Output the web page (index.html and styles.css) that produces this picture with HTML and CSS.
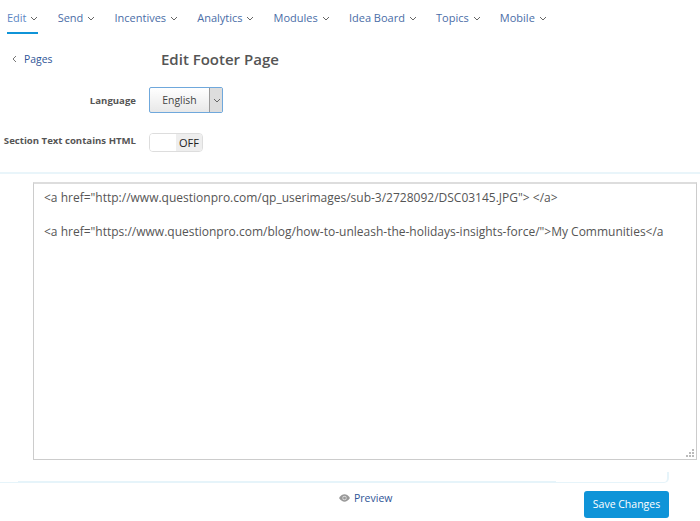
FILE: index.html
```html
<!DOCTYPE html>
<html lang="en">
<head>
<meta charset="utf-8">
<title>Edit Footer Page</title>
<link rel="stylesheet" href="styles.css">
</head>
<body>
<nav class="nav">
  <a class="nav-item active">Edit <svg class="caret" viewBox="0 0 8 5"><path d="M1 1l3 3 3-3"/></svg></a>
  <a class="nav-item">Send <svg class="caret" viewBox="0 0 8 5"><path d="M1 1l3 3 3-3"/></svg></a>
  <a class="nav-item">Incentives <svg class="caret" viewBox="0 0 8 5"><path d="M1 1l3 3 3-3"/></svg></a>
  <a class="nav-item">Analytics <svg class="caret" viewBox="0 0 8 5"><path d="M1 1l3 3 3-3"/></svg></a>
  <a class="nav-item">Modules <svg class="caret" viewBox="0 0 8 5"><path d="M1 1l3 3 3-3"/></svg></a>
  <a class="nav-item">Idea Board <svg class="caret" viewBox="0 0 8 5"><path d="M1 1l3 3 3-3"/></svg></a>
  <a class="nav-item">Topics <svg class="caret" viewBox="0 0 8 5"><path d="M1 1l3 3 3-3"/></svg></a>
  <a class="nav-item">Mobile <svg class="caret" viewBox="0 0 8 5"><path d="M1 1l3 3 3-3"/></svg></a>
</nav>
<header class="page-head">
  <a class="back"><svg class="back-icon" viewBox="0 0 5 8"><path d="M4 1L1 4l3 3"/></svg><span>Pages</span></a>
  <h1 class="title">Edit Footer Page</h1>
</header>
<section class="form">
  <div class="row row-lang">
    <label class="label">Language</label>
    <div class="select"><span class="select-value">English</span><span class="select-arrow"><svg class="caret" viewBox="0 0 8 5"><path d="M1 1l3 3 3-3"/></svg></span></div>
  </div>
  <div class="row row-html">
    <label class="label label-raised">Section Text contains HTML</label>
    <div class="toggle"><span class="toggle-off"></span><span class="toggle-state">OFF</span></div>
  </div>
</section>
<section class="panel">
  <div class="editor-wrap">
    <textarea class="editor" spellcheck="false" wrap="off">&lt;a href="http://www.questionpro.com/qp_userimages/sub-3/2728092/DSC03145.JPG"&gt; &lt;/a&gt;

&lt;a href="https://www.questionpro.com/blog/how-to-unleash-the-holidays-insights-force/"&gt;My Communities&lt;/a</textarea>
    <svg class="grip" viewBox="0 0 8 8"><path d="M6 0h2v2H6zM3 3h2v2H3zM6 3h2v2H6zM0 6h2v2H0zM3 6h2v2H3zM6 6h2v2H6z"/></svg>
  </div>
  <div class="panel-foot"></div>
</section>
<footer class="actions">
  <a class="preview"><svg class="eye" viewBox="0 0 12 8"><path d="M0 4c2-3 4-4 6-4s4 1 6 4c-2 3-4 4-6 4S2 7 0 4z"/><circle cx="6" cy="4" r="2.4" fill="#ddd"/><circle cx="6" cy="4" r="1.5"/></svg>Preview</a>
  <button class="save" type="button">Save Changes</button>
</footer>
</body>
</html>
```
FILE: styles.css
```css
* { box-sizing: border-box; }
html, body { margin: 0; padding: 0; }
body {
  width: 700px;
  height: 521px;
  overflow: hidden;
  background: #fff;
  font-family: "Open Sans", "Noto Sans", sans-serif;
  font-size: 11px;
  color: #555;
}
.nav {
  display: flex;
  padding-left: 7px;
  height: 34px;
  gap: 19.25px;
}
.nav-item {
  display: block;
  height: 34px;
  padding-top: 9px;
  line-height: 17px;
  font-size: 11px;
  color: #4a6da7;
  white-space: nowrap;
}
.nav-item.active {
  color: #5b86c4;
  border-bottom: 2px solid #0f94d8;
}
.caret {
  width: 8px;
  height: 5px;
  margin-left: 1px;
  vertical-align: 1px;
  fill: none;
  stroke: #666;
  stroke-width: 1;
}
.page-head {
  display: flex;
  align-items: center;
  height: 50px;
  padding-left: 12px;
}
.back {
  display: flex;
  align-items: center;
  width: 149px;
  color: #2f5597;
  font-size: 10.4px;
  font-weight: 500;
}
.back-icon {
  width: 5px;
  height: 8px;
  margin-right: 7px;
  fill: none;
  stroke: #777;
  stroke-width: 1;
}
.title {
  margin: 0;
  font-size: 15px;
  font-weight: 600;
  color: #555;
}
.row {
  display: flex;
  align-items: center;
}
.row-lang { height: 26px; margin-top: 3px; }
.row-html { height: 20px; margin-top: 19px; }
.label {
  width: 136px;
  margin-right: 13px;
  text-align: right;
  font-size: 9.6px;
  font-weight: 700;
  color: #555;
  white-space: nowrap;
}
.label-raised { margin-bottom: 4px; }
.select {
  display: flex;
  width: 74px;
  height: 26px;
  border: 1px solid #6fa8dc;
  border-radius: 2px;
  background: linear-gradient(#fff, #e8e8e8);
}
.select-value {
  flex: 1;
  text-align: center;
  line-height: 24px;
  color: #444;
  font-size: 10.4px;
}
.select-arrow {
  width: 13px;
  display: flex;
  align-items: center;
  justify-content: center;
  border-left: 1px solid #999;
  background: #ddd;
}
.toggle {
  display: flex;
  width: 54px;
  height: 19px;
  border: 1px solid #ddd;
  border-radius: 4px;
  overflow: hidden;
}
.toggle-off { width: 26px; background: #fff; }
.toggle-state {
  flex: 1;
  background: #eee;
  text-align: center;
  line-height: 17px;
  font-size: 11px;
  color: #222;
}
.panel {
  margin-top: 20px;
  height: 311px;
  border-top: 2px solid #e9f5fa;
}
.editor-wrap {
  position: relative;
  width: 664px;
  height: 278px;
  margin: 8px 0 0 33px;
}
.editor {
  display: block;
  width: 100%;
  height: 100%;
  padding: 5px 10px;
  margin: 0;
  border: 1px solid #ccc;
  border-top: 2px solid #ddd;
  border-radius: 0;
  outline: none;
  overflow: hidden;
  resize: none;
  background: #fff;
  font-family: "Open Sans", "Noto Sans", sans-serif;
  font-size: 12px;
  line-height: 17px;
  color: #555;
}
.grip {
  position: absolute;
  right: 3px;
  bottom: 3px;
  width: 8px;
  height: 8px;
  fill: #bbb;
}
.panel-foot {
  width: 669px;
  height: 23px;
  position: relative;
}
.panel-foot::after {
  content: "";
  position: absolute;
  right: 0;
  bottom: 0;
  left: 0;
  height: 10px;
  border-bottom: 1px solid #e6f4fa;
  border-right: 2px solid #e6f4fa;
  border-bottom-right-radius: 5px;
  background: linear-gradient(#e6f4fa, #e6f4fa) 18px 100% / 538px 1px no-repeat;
}
.actions {
  display: flex;
  align-items: flex-start;
  padding-left: 339px;
}
.preview {
  display: flex;
  align-items: center;
  margin-top: 6px;
  width: 245px;
  height: 17px;
  color: #2f5597;
  font-size: 10.5px;
  font-weight: 500;
}
.eye {
  width: 11px;
  height: 8px;
  margin-right: 4px;
  fill: #999;
}
.save {
  margin-top: 8px;
  width: 85px;
  height: 27px;
  padding: 0 0 2px;
  border: 0;
  border-radius: 3px;
  background: #0f94d8;
  color: #fff;
  font-family: inherit;
  font-size: 10.5px;
}
```
